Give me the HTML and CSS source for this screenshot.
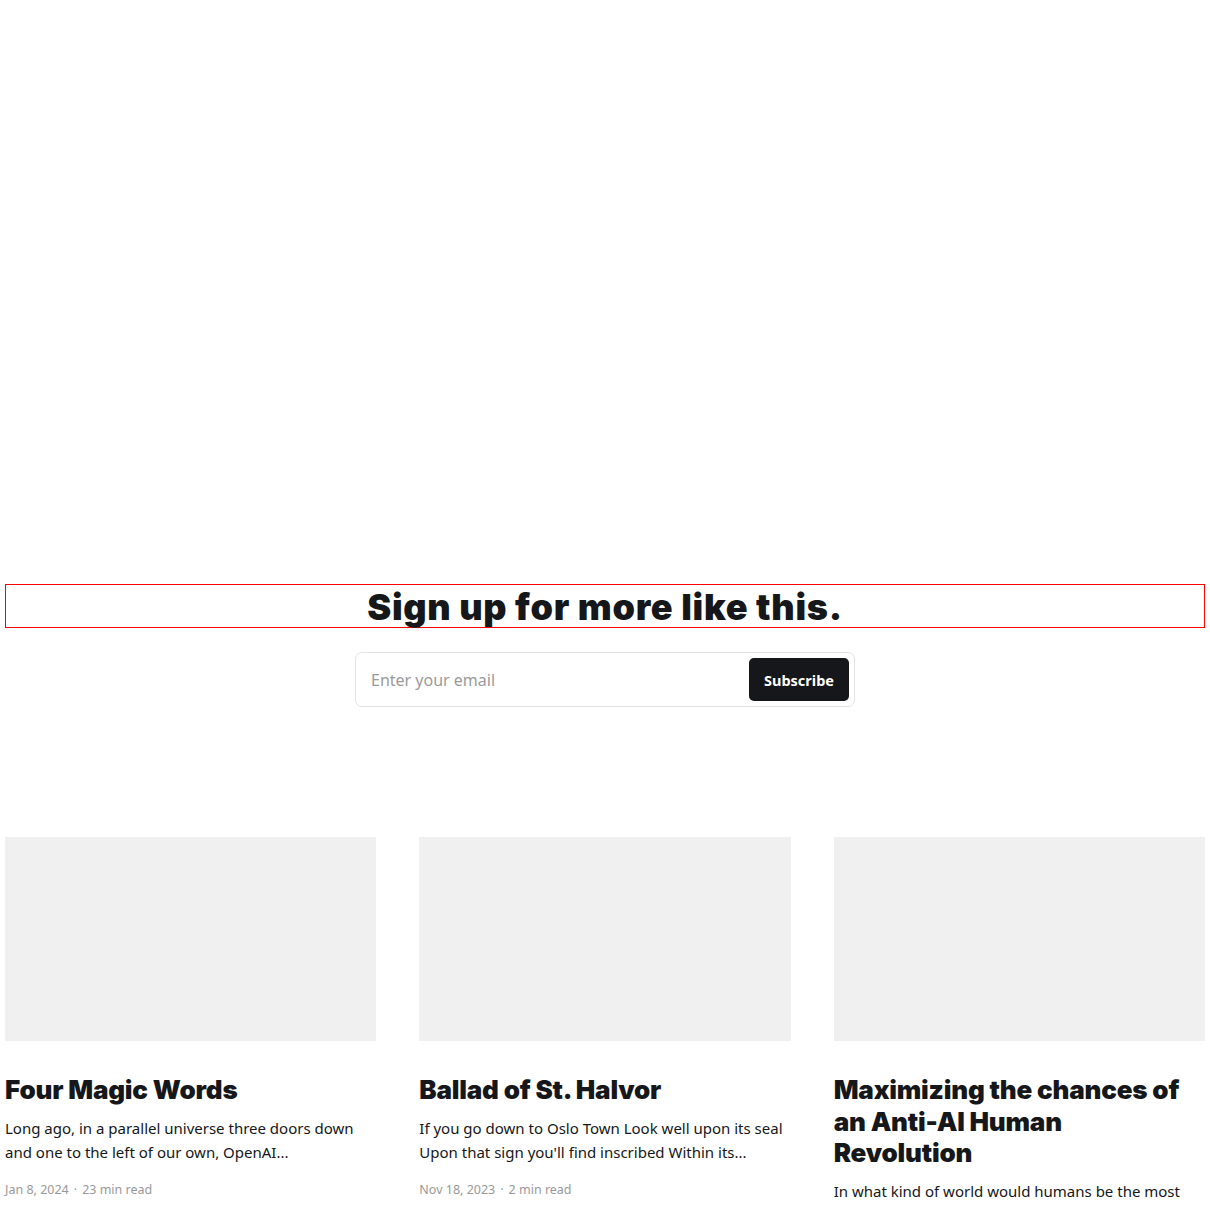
FILE: index.html
```html
<!DOCTYPE html>
<html lang="en">
<head>
<meta charset="utf-8">
<title>Sign up</title>
<link rel="stylesheet" href="styles.css">
</head>
<body>
<main class="page">
  <div class="hero"></div>
  <section class="cta">
    <h2 class="cta-title">Sign up for more like this.</h2>
    <form class="cta-form">
      <input class="cta-input" type="email" placeholder="Enter your email">
      <button class="cta-button" type="button">Subscribe</button>
    </form>
  </section>
  <section class="feed">
    <article class="card">
      <div class="card-image"></div>
      <h3 class="card-title">Four Magic Words</h3>
      <p class="card-excerpt">Long ago, in a parallel universe three doors down and one to the left of our own, OpenAI...</p>
      <div class="card-meta"><span>Jan 8, 2024</span><span class="dot">·</span><span>23 min read</span></div>
    </article>
    <article class="card">
      <div class="card-image"></div>
      <h3 class="card-title">Ballad of St. Halvor</h3>
      <p class="card-excerpt">If you go down to Oslo Town Look well upon its seal Upon that sign you'll find inscribed Within its...</p>
      <div class="card-meta"><span>Nov 18, 2023</span><span class="dot">·</span><span>2 min read</span></div>
    </article>
    <article class="card">
      <div class="card-image"></div>
      <h3 class="card-title">Maximizing the chances of an Anti-AI Human Revolution</h3>
      <p class="card-excerpt">In what kind of world would humans be the most likely to rise up against AI and the world it would bring?</p>
      <div class="card-meta"><span>Oct 2, 2023</span><span class="dot">·</span><span>9 min read</span></div>
    </article>
  </section>
</main>
</body>
</html>
```

FILE: styles.css
```css
html, body {
  margin: 0;
  padding: 0;
  background: #fff;
}
body {
  font-family: "Noto Sans", "Open Sans", sans-serif;
  color: #15171a;
}
.page {
  max-width: 1200px;
  margin: 0 auto;
}
.hero {
  height: 584px;
}
.cta {
  display: flex;
  flex-direction: column;
  align-items: center;
}
.cta-title {
  align-self: stretch;
  margin: 0;
  padding-top: 2px;
  border: 1px solid #ff0000;
  text-align: center;
  font-family: "Inter", sans-serif;
  font-weight: 900;
  font-size: 36px;
  line-height: 40px;
  letter-spacing: 0.7px;
  color: #15171a;
}
.cta-form {
  margin-top: 24px;
  width: 500px;
  height: 55px;
  box-sizing: border-box;
  border: 1px solid #e3e3e3;
  border-radius: 7px;
  padding: 5px;
  display: flex;
  align-items: stretch;
}
.cta-input {
  flex: 1;
  min-width: 0;
  border: 0;
  outline: 0;
  padding: 0 10px 0 10px;
  font-family: "Noto Sans", sans-serif;
  font-size: 16px;
  color: #15171a;
  background: transparent;
}
.cta-input::placeholder {
  color: #9a9a9a;
}
.cta-button {
  width: 100px;
  border: 0;
  border-radius: 5px;
  background: #15171a;
  color: #fff;
  font-family: "Noto Sans", sans-serif;
  font-weight: 700;
  font-size: 14.5px;
  cursor: pointer;
}
.feed {
  margin-top: 130px;
  display: grid;
  grid-template-columns: repeat(3, 1fr);
  column-gap: 43px;
}
.card-image {
  height: 204px;
  background: #f0f0f0;
}
.card-title {
  max-width: 355px;
  margin: 33px 0 0;
  font-family: "Inter", sans-serif;
  font-weight: 900;
  font-size: 26px;
  line-height: 31.5px;
  letter-spacing: -0.2px;
  color: #15171a;
}
.card-excerpt {
  margin: 10px 0 0;
  font-size: 15px;
  line-height: 24px;
  color: #15171a;
}
.card-meta {
  margin-top: 17px;
  font-size: 12.5px;
  line-height: 18px;
  color: #999;
  display: flex;
  gap: 5px;
}
```
